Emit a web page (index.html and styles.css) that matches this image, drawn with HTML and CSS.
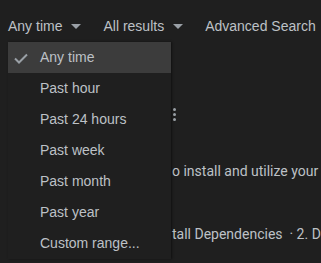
FILE: index.html
```html
<!DOCTYPE html>
<html>
<head>
<meta charset="utf-8">
<link rel="stylesheet" href="styles.css">
</head>
<body>
<div class="tools">
  <span class="tool">Any time<span class="caret"></span></span>
  <span class="tool">All results<span class="caret"></span></span>
  <span class="tool adv">Advanced Search</span>
</div>
<div class="results">
  <div class="more"><span></span><span></span><span></span></div>
  <div class="snippet">o install and utilize your</div>
  <div class="links">tall Dependencies &nbsp;· 2. Do</div>
</div>
<ul class="menu">
  <li class="item selected"><svg class="check" width="14" height="11" viewBox="0 0 14 11"><path d="M1 5.5 L5 9.5 L13 1.5" fill="none" stroke="#9aa0a6" stroke-width="2"/></svg>Any time</li>
  <li class="item">Past hour</li>
  <li class="item">Past 24 hours</li>
  <li class="item">Past week</li>
  <li class="item">Past month</li>
  <li class="item">Past year</li>
  <li class="item">Custom range...</li>
</ul>
</body>
</html>
```
FILE: styles.css
```css
html, body {
  margin: 0;
  padding: 0;
  background: #1f1f1f;
  overflow: hidden;
  height: 263px;
}
body {
  font-family: "Liberation Sans", Arial, sans-serif;
  font-size: 14px;
  color: #bdc1c6;
  position: relative;
}
.tools {
  display: flex;
  align-items: center;
  padding: 17px 0 0 8px;
  height: 18px;
  line-height: 18px;
  gap: 22px;
}
.tool {
  display: flex;
  align-items: center;
  gap: 9px;
  white-space: nowrap;
}
.caret {
  width: 0;
  height: 0;
  border-left: 5px solid transparent;
  border-right: 5px solid transparent;
  border-top: 5px solid #9aa0a6;
  margin-top: 1px;
}
.results {
  padding-left: 172px;
  font-family: Roboto, "Liberation Sans", sans-serif;
  white-space: nowrap;
  overflow: hidden;
}
.more {
  display: flex;
  flex-direction: column;
  gap: 2px;
  margin: 73px 0 0 1px;
  width: 3px;
}
.more span {
  width: 3px;
  height: 3px;
  border-radius: 50%;
  background: #9aa0a6;
}
.snippet {
  margin-top: 40px;
  line-height: 20px;
}
.links {
  margin-top: 43px;
  line-height: 20px;
}
.menu {
  position: absolute;
  top: 42px;
  left: 8px;
  width: 163px;
  margin: 0;
  padding: 0;
  list-style: none;
  background: #1f1f1f;
  box-shadow: 1px 0 2px rgba(0,0,0,0.5);
}
.item {
  position: relative;
  height: 31px;
  line-height: 31px;
  padding-left: 32px;
  color: #bdc1c6;
  white-space: nowrap;
}
.item.selected {
  background: #3c3c3c;
}
.check {
  position: absolute;
  left: 6px;
  top: 11px;
}
```
